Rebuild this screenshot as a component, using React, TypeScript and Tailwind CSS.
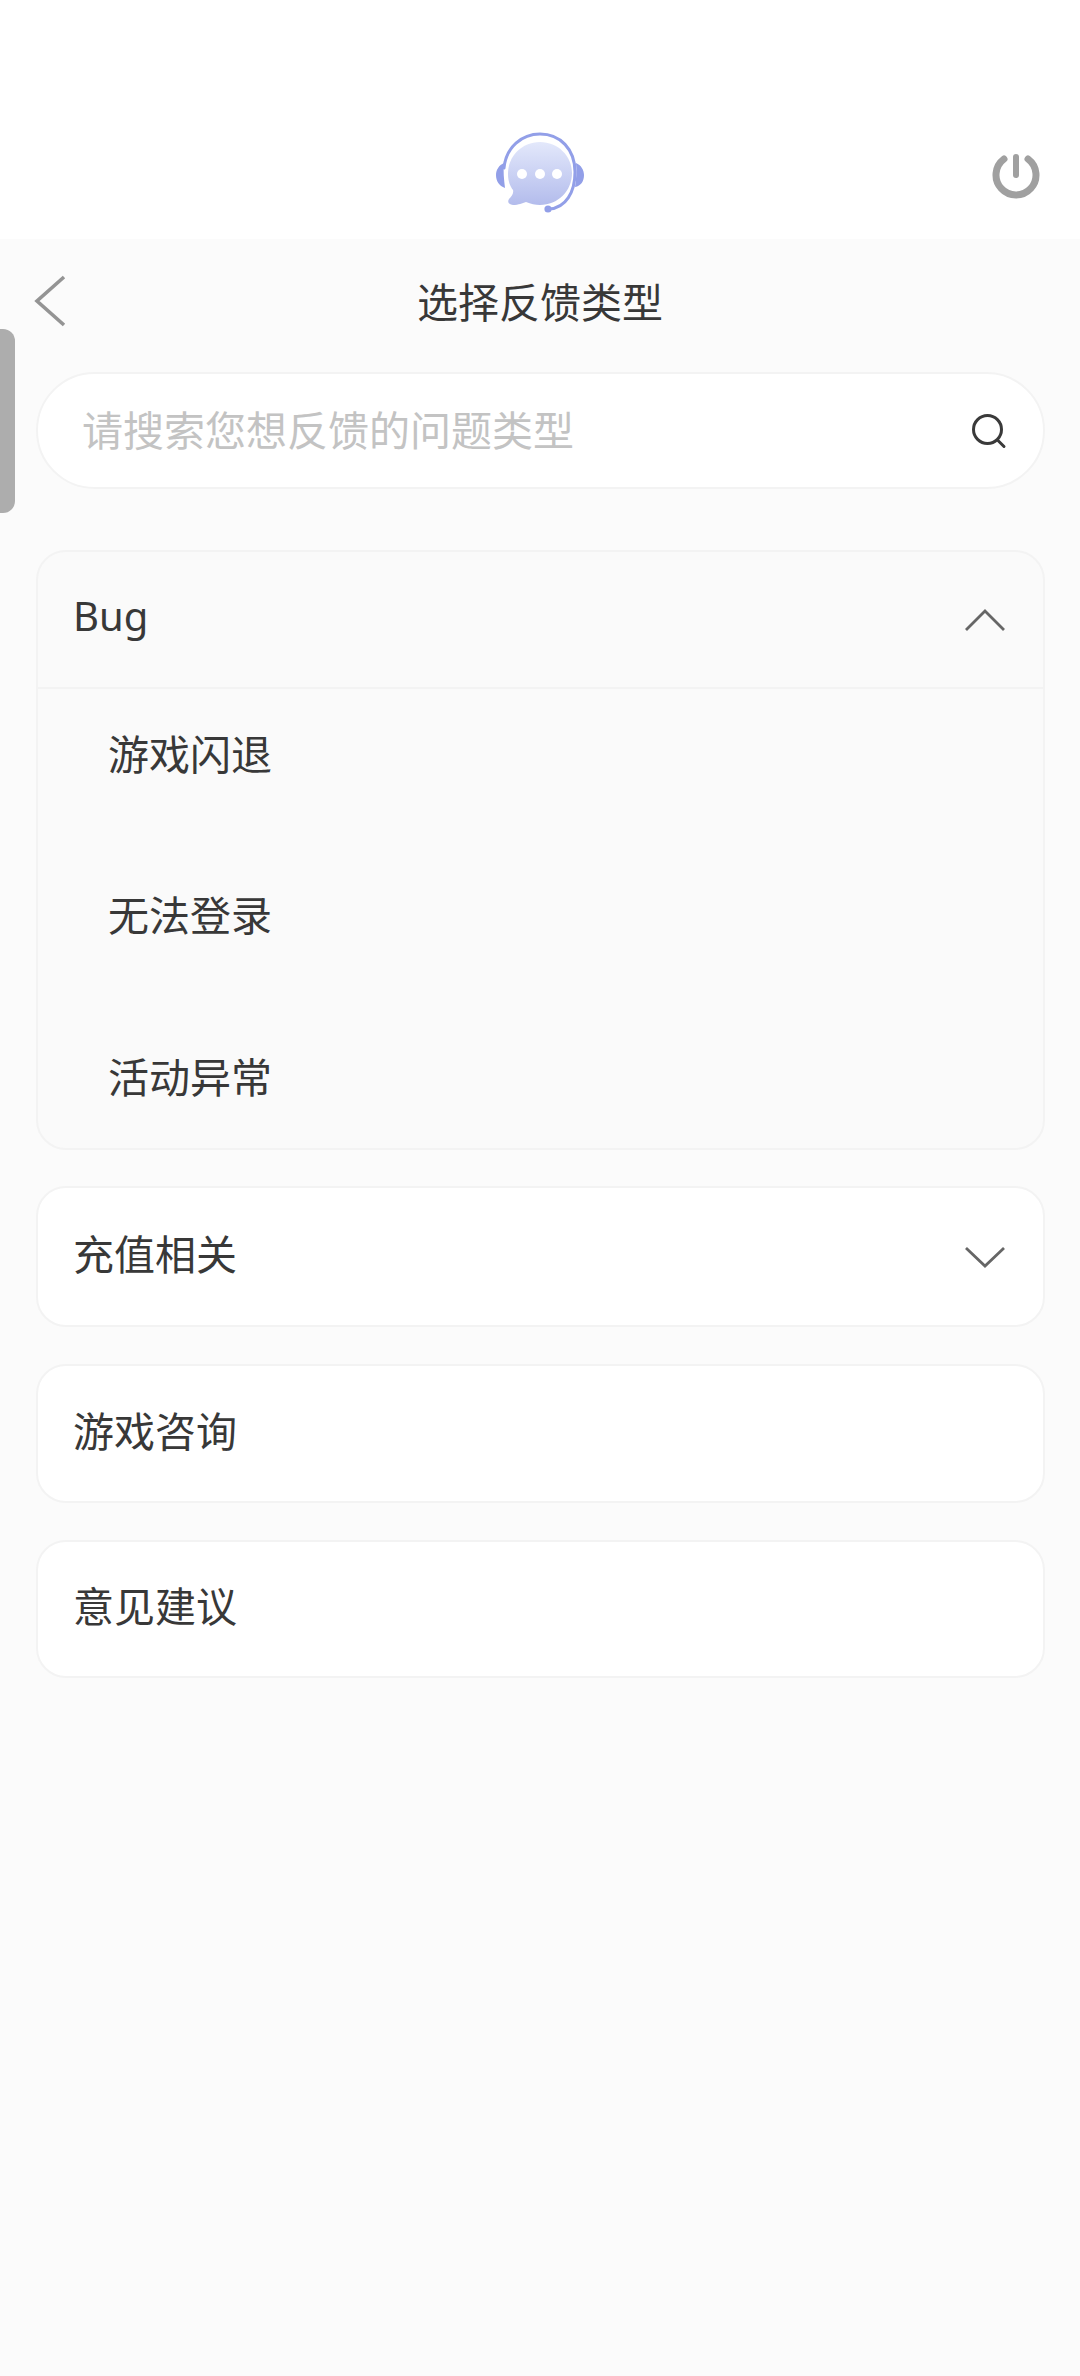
import { FC } from "react";

const font = { fontFamily: '"Noto Sans CJK SC", sans-serif' };

const Logo: FC = () => (
  <svg width="90" height="82" viewBox="0 0 90 82" fill="none">
    <defs>
      <linearGradient id="bubble" x1="0" y1="0" x2="0" y2="1">
        <stop offset="0" stopColor="#e3e8fb" />
        <stop offset="1" stopColor="#b3bcec" />
      </linearGradient>
    </defs>
    <path d="M9 31 C4 33 1 38 1 43 C1 49 4 54 10 56 C9 48 8 39 9 31 Z" fill="#929fe8" />
    <path d="M81 31 C86 33 89 38 89 43 C89 49 86 54 80 55 C81 48 82 39 81 31 Z" fill="#929fe8" />
    <path d="M9 36 C11 15 27 2 45 2 C65 2 80 17 80 40 C80 60 71 76 54 77" stroke="#929fe8" strokeWidth="3" strokeLinecap="round" />
    <circle cx="53" cy="77" r="3.6" fill="#929fe8" />
    <path d="M45 10 C27 10 13 24 13 42 C13 49 15 54 18 58 C19 62 16 65 14 67 C12 70 14 73 18 73 C24 73 27 71 31 70 C36 72 40 73 45 73 C63 73 77 59 77 41 C77 24 63 10 45 10 Z" fill="url(#bubble)" />
    <circle cx="27" cy="42" r="5" fill="#fff" />
    <circle cx="45" cy="42" r="5" fill="#fff" />
    <circle cx="62" cy="42" r="5" fill="#fff" />
  </svg>
);

const Power: FC = () => (
  <svg width="48" height="48" viewBox="0 0 48 48" fill="none" stroke="#a0a0a0" strokeLinecap="round" strokeWidth="7">
    <path d="M12 8 A20 20 0 1 0 36 8" />
    <path d="M24 6 V24" strokeWidth="6" />
  </svg>
);

const Chevron: FC<{ up?: boolean }> = ({ up }) => (
  <svg width="40" height="24" viewBox="0 0 40 24" fill="none" stroke="#666" strokeWidth="2.8">
    <path d={up ? "M1 22 L20 3 L39 22" : "M1 3 L20 21 L39 3"} />
  </svg>
);

const Row: FC<{ title: string; height: string; open?: boolean }> = ({ title, height, open }) => (
  <div className={`flex items-center justify-between rounded-[30px] border-2 border-[#f3f3f3] bg-white pl-[35px] pr-[38px] ${height}`}>
    <span className="mb-[9px] text-[41px] leading-none text-[#383838]">{title}</span>
    {open !== undefined && <Chevron />}
  </div>
);

export default function App() {
  return (
    <div className="relative min-h-[2376px] bg-[#fbfbfb]" style={font}>
      <header className="relative flex h-[239px] items-end justify-center bg-white pb-[25px]">
        <Logo />
        <div className="absolute bottom-[40px] right-[40px]">
          <Power />
        </div>
      </header>

      {/* floating handle on the left edge */}
      <div className="absolute left-0 top-[329px] h-[184px] w-[15px] rounded-r-[12px] bg-[#adadad]" />

      <div className="relative flex h-[127px] items-center justify-center">
        <svg className="absolute left-[34px] top-[36px]" width="32" height="52" viewBox="0 0 32 52" fill="none" stroke="#949494" strokeWidth="3.6">
          <path d="M30 2 L3 26 L30 50" />
        </svg>
        <h1 className="mb-[5px] text-[41px] font-normal leading-none text-[#383838]">选择反馈类型</h1>
      </div>

      <div className="flex flex-col pl-[36px] pr-[35px]">
        <div className="mt-[6px] flex h-[117px] items-center justify-between rounded-full border-2 border-[#f3f3f3] bg-white pl-[44px] pr-[36px]">
          <span className="mb-[5px] text-[41px] leading-none text-[#c3c3c3]">请搜索您想反馈的问题类型</span>
          <svg width="36" height="36" viewBox="0 0 36 36" fill="none" stroke="#3a3a3a" strokeWidth="3" strokeLinecap="round">
            <circle cx="16.5" cy="16.5" r="14" />
            <path d="M26.5 27 L33 33.5" />
          </svg>
        </div>

        <div className="mt-[61px] h-[600px] overflow-hidden rounded-[30px] border-2 border-[#f3f3f3] bg-[#fafafa]">
          <div className="flex h-[137px] items-center justify-between border-b-2 border-[#f3f3f3] pl-[35px] pr-[38px]">
            <span className="mb-[7px] text-[40px] leading-none text-[#383838]" style={{ fontFamily: '"Noto Sans", "Noto Sans CJK SC", sans-serif' }}>Bug</span>
            <Chevron up />
          </div>
          <div className="flex flex-col pl-[70px]">
            {["游戏闪退", "无法登录", "活动异常"].map((item) => (
              <div key={item} className="flex h-[161px] items-center text-[41px] leading-none text-[#383838] first:h-[127px] [&:nth-child(2)]:h-[195px] [&:nth-child(3)]:h-[129px]">
                {item}
              </div>
            ))}
          </div>
        </div>

        <div className="mt-[36px] flex flex-col gap-[37px]">
          <Row title="充值相关" height="h-[141px]" open={false} />
          <Row title="游戏咨询" height="h-[139px]" />
          <Row title="意见建议" height="h-[138px]" />
        </div>
      </div>
    </div>
  );
}
